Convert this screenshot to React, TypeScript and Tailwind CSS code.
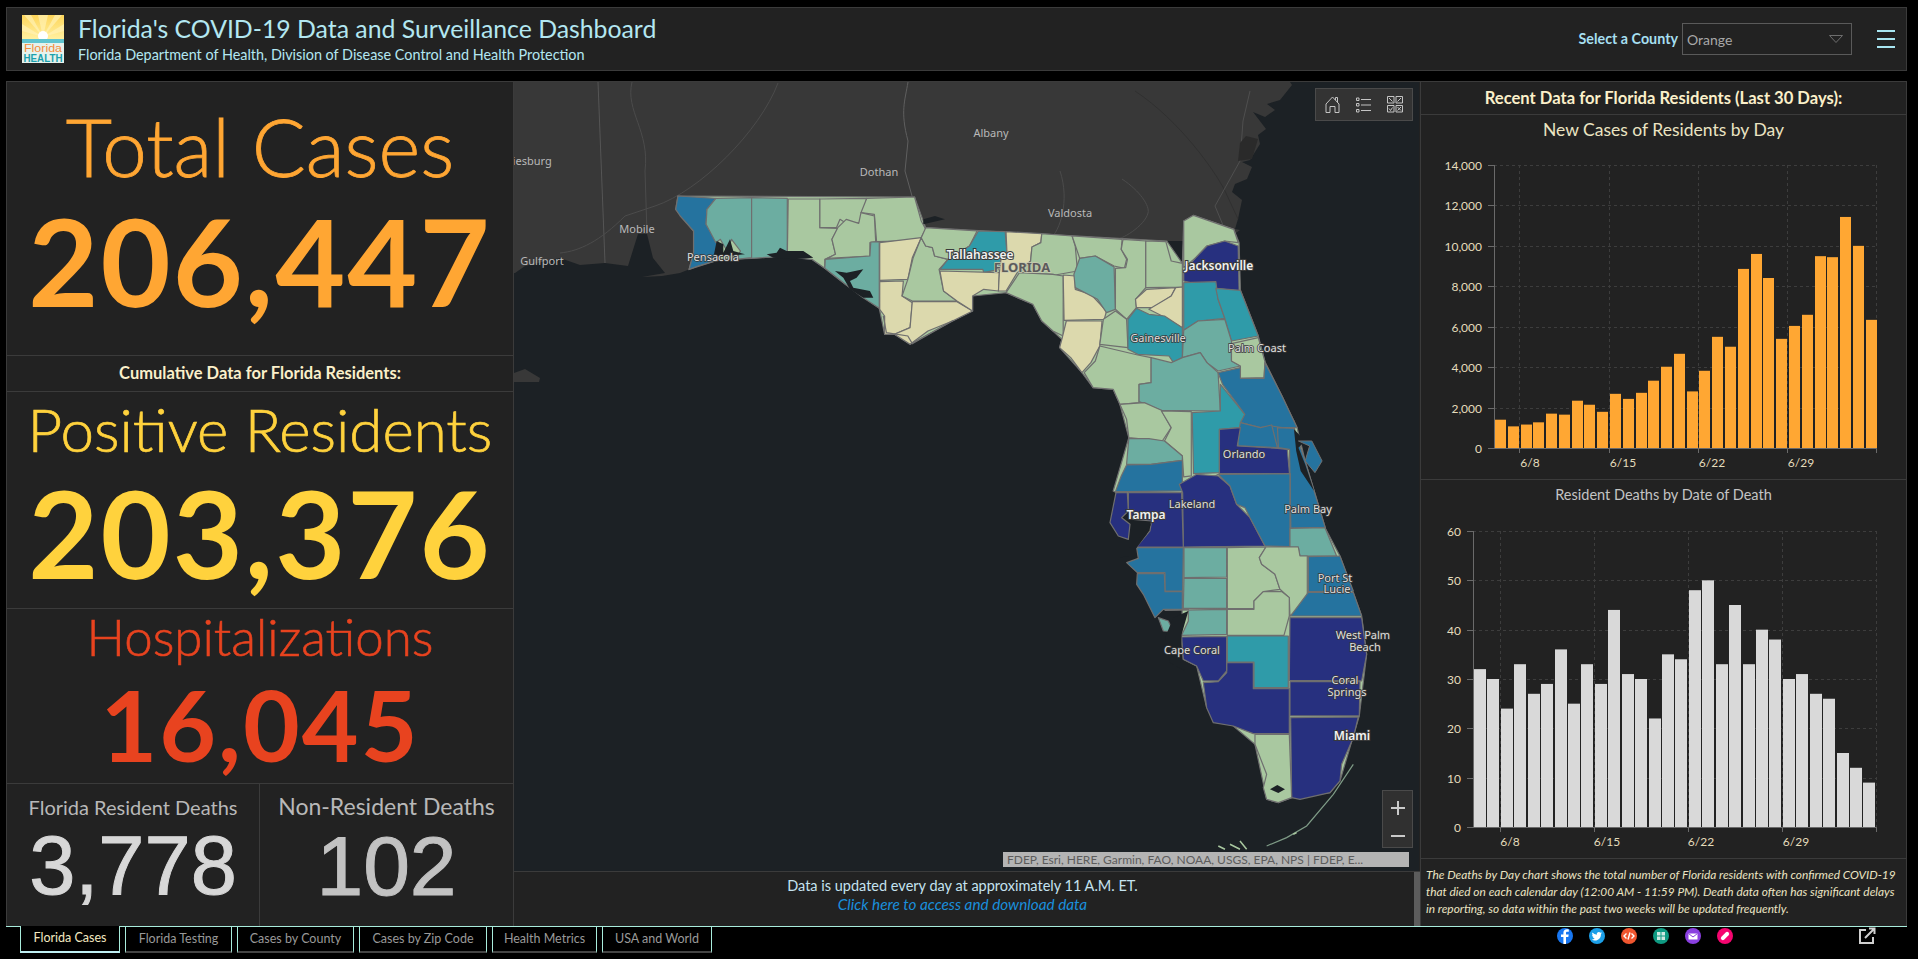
const DARK = "#27307f";
const BLUE = "#25739f";
const TEAL = "#2f9ba9";
const SAGE = "#6cada1";
const PALE = "#a9c8a0";
const CREAM = "#dcd9ad";
const WATER = "#1c2125";

type Region = [string, string];

// north and central counties, in the coordinates of the 700x380 crop
const northCounties: Region[] = [
  [BLUE, "1390,750 1465,750 1470,835 1390,835"],
  [BLUE, "85,75 170,82 150,115 148,160 175,215 180,265 130,285 110,295 120,245 120,180 90,135 80,115"],
  [SAGE, "170,82 250,80 250,260 215,265 225,240 205,205 195,240 180,205 170,215 148,160 150,115"],
  [SAGE, "250,80 330,82 330,255 250,262"],
  [PALE, "332,84 403,84 403,170 443,172 430,205 438,250 414,265 414,292 385,265 330,258"],
  [PALE, "403,84 508,82 493,155 462,157 448,145 440,170 403,170"],
  [PALE, "508,82 615,78 630,150 640,175 625,212 575,210 530,212 525,130 495,125"],
  [PALE, "443,170 462,145 490,157 495,125 525,135 528,212 515,215 515,255 420,262 438,250 430,205"],
  [SAGE, "415,265 515,255 517,213 536,213 536,412 500,380 460,340 414,292"],
  [CREAM, "537,215 630,200 610,260 600,325 537,328"],
  [CREAM, "537,332 590,330 587,375 610,395 605,470 570,490 548,490 548,435 537,415"],
  [PALE, "630,200 640,225 655,230 660,255 690,265 670,295 680,360 710,390 610,390 587,375 600,325 612,260"],
  [CREAM, "610,392 710,392 745,420 700,450 645,480 605,520 570,490 605,470"],
  [PALE, "640,170 755,180 738,225 690,265 660,255 655,230 640,225 630,200"],
  [TEAL, "758,180 818,182 822,245 810,250 805,295 770,305 768,295 672,295 690,265 738,225"],
  [CREAM, "672,300 805,305 803,360 770,355 745,375 745,420 710,390 680,360"],
  [CREAM, "820,182 900,188 898,215 878,228 875,270 845,305 820,360 803,360 805,305 810,250 822,245"],
  [PALE, "900,188 968,195 975,225 980,300 930,312 925,310 850,305 875,270 878,228 898,215"],
  [PALE, "850,305 925,310 948,315 948,495 925,480 900,450 880,400 820,365"],
  [CREAM, "948,312 975,315 975,355 1010,370 1045,420 1040,445 950,448"],
  [CREAM, "955,450 1035,450 1030,525 1010,575 990,605 965,560 940,530 945,505"],
  [PALE, "968,195 1080,205 1078,235 1090,265 1085,292 1062,285 1020,255 985,262"],
  [SAGE, "985,262 1020,255 1062,288 1065,415 1045,425 1025,385 975,350 972,310"],
  [PALE, "1082,205 1133,210 1133,350 1110,385 1112,410 1090,445 1065,415 1065,292 1088,290 1092,265 1078,235"],
  [PALE, "1133,210 1178,212 1190,270 1215,277 1215,348 1133,350"],
  [PALE, "1218,150 1240,133 1330,175 1340,215 1310,210 1270,225 1245,260 1218,290"],
  [DARK, "1218,300 1245,260 1270,225 1310,210 1340,225 1342,360 1290,352 1218,330"],
  [CREAM, "1110,385 1135,355 1200,350 1190,375 1150,410 1112,410"],
  [CREAM, "1200,350 1215,348 1215,470 1170,435 1140,415 1190,375"],
  [PALE, "1065,420 1090,445 1093,530 1030,520 1038,445"],
  [TEAL, "1112,412 1140,430 1175,435 1215,470 1215,560 1195,575 1185,555 1115,550 1093,535 1093,445"],
  [TEAL, "1218,335 1290,332 1295,385 1310,442 1250,450 1218,478"],
  [TEAL, "1290,352 1345,358 1385,495 1325,510 1310,442 1295,385"],
  [SAGE, "1218,478 1250,450 1310,445 1325,510 1325,570 1345,585 1295,600 1270,575 1255,545 1215,560"],
  [PALE, "1325,518 1385,500 1400,572 1398,620 1345,622 1345,585 1325,570"],
  [PALE, "1030,525 1115,552 1145,560 1145,635 1118,640 1118,695 1075,700 1060,655 1015,650 995,605 1020,570"],
  [SAGE, "1145,560 1190,575 1215,560 1255,545 1270,575 1295,605 1300,720 1168,718 1118,692 1118,640 1145,635"],
  [PALE, "1075,700 1130,695 1168,718 1190,770 1170,810 1095,800 1090,745"],
  [PALE, "1168,720 1235,722 1235,915 1218,918 1215,855 1175,810 1190,770"],
  [SAGE, "1095,803 1140,803 1175,810 1215,855 1215,868 1145,880 1090,880"],
  [BLUE, "1090,882 1145,880 1215,868 1215,960 1090,962 1065,962 1078,915"],
  [TEAL, "1237,725 1300,720 1300,640 1355,730 1345,770 1298,775 1298,905 1240,908"],
  [BLUE, "1295,605 1345,590 1345,622 1398,622 1400,575 1440,680 1472,770 1438,770 1415,765 1390,770 1345,755 1355,730 1305,640"],
  [BLUE, "1345,755 1390,770 1415,762 1428,830 1340,825 1338,800"],
  [DARK, "1298,775 1345,770 1338,825 1428,832 1450,835 1455,908 1298,908"],
  [BLUE, "1428,770 1465,772 1490,870 1535,1070 1458,1072 1455,835 1430,830"],
];

// south florida, in the coordinates of the 420x460 crop
const southCounties: Region[] = [
  [DARK, "538,190 590,160 655,165 690,195 710,250 750,290 795,375 550,378 548,215"],
  [DARK, "385,215 545,215 550,378 410,378 450,330 455,300 400,295 385,270"],
  [DARK, "348,215 382,215 385,270 365,290 390,310 385,355 355,345 330,305"],
  [BLUE, "655,160 870,158 870,377 795,375 750,290 735,260 710,250 690,195"],
  [SAGE, "870,322 975,320 1010,405 900,405 895,378 870,378"],
  [BLUE, "410,380 550,380 548,510 495,510 495,455 412,455 380,425 415,412"],
  [BLUE, "412,458 493,458 495,512 547,512 547,565 490,565 465,590 430,520 410,490"],
  [SAGE, "552,380 680,380 680,468 552,470"],
  [SAGE, "552,472 680,472 680,562 550,562"],
  [SAGE, "495,568 680,565 680,640 545,643 565,600 565,565"],
  [SAGE, "475,590 505,600 520,632 490,630"],
  [PALE, "682,380 798,378 778,410 785,430 825,460 840,505 790,512 762,540 762,563 682,563"],
  [PALE, "798,378 895,378 900,405 922,405 922,540 870,585 868,530 840,505 825,460 785,430 778,410"],
  [PALE, "682,565 762,565 762,540 790,512 845,512 868,530 868,585 852,643 682,643"],
  [BLUE, "925,407 1020,405 1060,510 925,512"],
  [BLUE, "925,514 1060,514 1085,585 872,585"],
  [DARK, "870,590 1085,590 1100,700 1085,780 868,778"],
  [DARK, "870,782 1080,782 1078,885 925,885 870,885"],
  [DARK, "872,890 1075,888 1060,950 1025,1030 1020,1080 990,1115 900,1135 875,1130"],
  [DARK, "610,785 655,782 680,755 680,725 760,725 760,803 868,803 868,938 760,938 700,915 640,905 620,860"],
  [DARK, "545,648 680,646 680,750 655,780 610,780 590,735 550,715"],
  [TEAL, "682,645 865,645 865,800 762,800 762,723 682,723"],
  [PALE, "765,940 868,940 875,1130 835,1145 800,1135 790,1100 800,1060 765,970"],
];

// silhouettes under the counties, so no land shows between neighbours
const northBase =
  "85,75 615,78 640,170 1180,210 1215,277 1218,150 1240,133 1330,175 1342,215 1345,358 1385,495 1400,572 1440,680 1472,770 1490,870 1535,1070 1300,1130 1060,960 1095,800 1075,700 1060,655 1015,650 990,605 940,530 945,505 900,450 880,400 820,365 745,375 745,420 700,450 605,520 570,490 548,490 536,412 460,340 414,292 385,265 330,255 250,262 180,265 110,295 120,245 120,180 80,115";
const southBase =
  "548,215 655,160 870,158 870,322 975,320 1020,405 1085,585 1100,700 1078,885 1020,1080 990,1115 875,1130 835,1145 800,1135 765,970 700,915 620,860 590,735 550,715 545,648 550,380";

const mapLabels: { t: string; x: number; y: number; strong?: boolean; muted?: boolean }[] = [
  { t: "Albany", x: 991, y: 136, muted: true },
  { t: "Dothan", x: 879, y: 175, muted: true },
  { t: "Valdosta", x: 1070, y: 216, muted: true },
  { t: "Hattiesburg", x: 521, y: 164, muted: true },
  { t: "Mobile", x: 637, y: 232, muted: true },
  { t: "Gulfport", x: 542, y: 264, muted: true },
  { t: "Pensacola", x: 713, y: 260 },
  { t: "Tallahassee", x: 980, y: 258, strong: true },
  { t: "Jacksonville", x: 1219, y: 269, strong: true },
  { t: "Gainesville", x: 1158, y: 341 },
  { t: "Palm Coast", x: 1257, y: 351 },
  { t: "Orlando", x: 1244, y: 457 },
  { t: "Lakeland", x: 1192, y: 507 },
  { t: "Tampa", x: 1146, y: 518, strong: true },
  { t: "Palm Bay", x: 1308, y: 512 },
  { t: "Port St", x: 1335, y: 581 },
  { t: "Lucie", x: 1337, y: 592 },
  { t: "West Palm", x: 1363, y: 638 },
  { t: "Beach", x: 1365, y: 650 },
  { t: "Cape Coral", x: 1192, y: 653 },
  { t: "Coral", x: 1345, y: 683 },
  { t: "Springs", x: 1347, y: 695 },
  { t: "Miami", x: 1352, y: 739, strong: true },
];

const newCases = [
  1400, 1070, 1160, 1270, 1700, 1650, 2340, 2140, 1790, 2680, 2430, 2730, 3330, 4020, 4660, 2800, 3820, 5500, 5010,
  8860, 9600, 8410, 5400, 6040, 6590, 9490, 9440, 11430, 10000, 6340,
];
const deaths = [
  32, 30, 24, 33, 27, 29, 36, 25, 33, 29, 44, 31, 30, 22, 35, 34, 48, 50, 33, 45, 33, 40, 38, 30, 31, 27, 26, 15, 12, 9,
];

const tabs = [
  { label: "Florida Cases", w: "w-[100px]", active: true },
  { label: "Florida Testing", w: "w-[107px]" },
  { label: "Cases by County", w: "w-[117px]" },
  { label: "Cases by Zip Code", w: "w-[128px]" },
  { label: "Health Metrics", w: "w-[105px]" },
  { label: "USA and World", w: "w-[110px]" },
];

function Counties({ regions, base, transform }: { regions: Region[]; base: string; transform: string }) {
  return (
    <g transform={transform}>
      <polygon points={base} fill={PALE} stroke="#6f6f6f" strokeWidth={1.2} vectorEffect="non-scaling-stroke" />
      {regions.map(([color, points]) => (
        <polygon
          key={points}
          points={points}
          fill={color}
          stroke="#6f6f6f"
          strokeWidth={1.2}
          strokeLinejoin="round"
          vectorEffect="non-scaling-stroke"
        />
      ))}
    </g>
  );
}

function FloridaMap() {
  return (
    <svg viewBox="514 81 905 790" className="block h-[790px] w-[905px] bg-[#1c2125]">
      {/* land north of florida */}
      <polygon
        fill="#383838"
        points="514,81 1290,81 1292,84 1280,99 1267,103 1275,109 1265,116 1253,111 1266,128 1258,134 1260,143 1250,159 1242,161 1252,166 1247,178 1235,183 1232,191 1242,199 1238,218 1235,228 1240,229 1225,240 900,240 780,245 700,255 690,268 680,272 662,275 642,276 665,272 653,257 647,233 638,233 628,265 605,262 580,264 560,257 525,265 515,272 514,272"
      />
      <polygon fill="#383838" points="514,372 525,368 540,377 539,381 514,381" />
      <g fill="none" stroke="#4b4b4b" strokeWidth="1">
        <path d="M598 81 L605 262" stroke="#555" />
        <path d="M632 81 C625 110 650 130 645 170 L647 233" />
        <path d="M778 82 C760 130 700 190 655 205 L625 215 C600 240 580 250 560 252" />
        <path d="M908 81 C905 100 900 110 908 140 L905 170 L912 195" stroke="#5f5f5f" />
        <path d="M1060 170 C1070 200 1060 230 1050 238" />
        <path d="M1122 178 C1140 190 1150 205 1148 212 C1145 225 1120 240 1115 238" />
        <path d="M1135 90 C1180 120 1215 170 1225 190 L1238 218" stroke="#303030" />
      </g>
      <polyline points="1225,229 1215,205 1240,160 1243,120 1250,90" fill="none" stroke="#4f4f4f" strokeWidth="1" />
      <polygon points="1240,142 1246,135 1258,138 1252,158 1238,160" fill="#2a2a2a" />

      <Counties regions={northCounties} base={northBase} transform="translate(640 170) scale(.4464 .3333)" />
      <Counties regions={southCounties} base={southBase} transform="translate(1000 420) scale(.3333)" />

      {/* bays and lagoons cut out of the counties */}
      <g transform="translate(510 80) scale(.3333)" fill={WATER}>
        <polygon points="770,520 800,515 810,500 830,510 880,510 910,530 850,535 790,530" />
        <polygon points="975,570 1010,575 1060,565 1040,590 1020,600 1030,620 1080,630 1090,650 1060,650 1020,625 1000,590" />
        <polygon points="620,480 640,490 640,515 660,475 670,510 705,520 650,525 610,530" />
        <polygon points="1240,415 1275,405 1305,415 1240,430" />
      </g>
      <g transform="translate(640 170) scale(.4464 .3333)">
        <polygon points="1465,775 1490,810 1475,830 1490,880 1510,960 1480,900 1470,840" fill={WATER} />
        <polygon
          points="1475,810 1505,810 1528,870 1512,905 1490,870 1500,825"
          fill={BLUE}
          stroke="#6f6f6f"
          vectorEffect="non-scaling-stroke"
        />
        <polyline
          points="545,435 552,485 600,495 610,518 660,480 702,448"
          fill="none"
          stroke="#6f6f6f"
          strokeWidth="1.2"
          vectorEffect="non-scaling-stroke"
        />
      </g>
      <g transform="translate(1000 420) scale(.3333)">
        <polygon points="360,410 420,350 455,305 440,340 410,380 385,405" fill={WATER} />
        <polygon points="520,590 565,570 545,640 540,720 555,750 510,725 495,650" fill={WATER} />
        <polygon points="810,1105 832,1092 855,1105 835,1116" fill={WATER} />
        <polyline
          points="800,1275 860,1250 920,1215 1000,1120 1060,1030"
          fill="none"
          stroke="#7f9c87"
          strokeWidth="1.2"
          vectorEffect="non-scaling-stroke"
        />
        <path
          d="M655 1275 l20 10 M690 1270 l30 15 M720 1260 l20 25 M880 1240 l10 -5"
          fill="none"
          stroke="#a9c8a0"
          strokeWidth="1.5"
          vectorEffect="non-scaling-stroke"
        />
      </g>

      <g textAnchor="middle" className="[font-family:'Noto_Sans',sans-serif]">
        {mapLabels.map((l) => (
          <text
            key={l.t}
            x={l.x}
            y={l.y}
            fill={l.muted ? "#b9b9b9" : l.strong ? "#f2f2f2" : "#dedede"}
            stroke={l.muted ? "none" : "#3a3a3a"}
            strokeWidth={l.strong ? 2 : 1.5}
            paintOrder="stroke"
            fontWeight={l.strong ? 600 : 400}
            fontSize={l.strong ? 12 : 11}
          >
            {l.t}
          </text>
        ))}
        <text
          x={1022}
          y={271}
          fill="#5b5b5b"
          stroke="#c9c9b0"
          strokeWidth={1.5}
          paintOrder="stroke"
          fontWeight={700}
          fontSize={13}
        >
          FLORIDA
        </text>
      </g>
    </svg>
  );
}

function BarChart({
  top,
  height,
  axisX,
  plotTop,
  plotBottom,
  max,
  step,
  ticks,
  values,
  barX,
  barStep,
  barW,
  fill,
  grid,
  labels,
}: {
  top: number;
  height: number;
  axisX: number;
  plotTop: number;
  plotBottom: number;
  max: number;
  step: number;
  ticks: string[];
  values: number[];
  barX: number;
  barStep: number;
  barW: number;
  fill: string;
  grid: number[];
  labels: { x: number; t: string }[];
}) {
  const right = 1875;
  const scale = (plotBottom - plotTop) / max;
  return (
    <svg viewBox={`1420 ${top} 485 ${height}`} className="block w-[485px]" height={height}>
      {ticks.map((t, i) => {
        const y = Math.round(plotBottom - i * step * scale) + 0.5;
        return (
          <g key={t}>
            {i > 0 && <line x1={axisX} x2={right} y1={y} y2={y} stroke="#3d3d3d" strokeDasharray="3 3" />}
            <line x1={axisX - 6} x2={axisX} y1={y} y2={y} stroke="#6a6a6a" />
            <text x={axisX - 12} y={y + 4} textAnchor="end" fill="#e4dcbc" fontSize={12}>
              {t}
            </text>
          </g>
        );
      })}
      {grid.map((x) => (
        <g key={x}>
          <line x1={x + 0.5} x2={x + 0.5} y1={plotTop} y2={plotBottom} stroke="#3d3d3d" strokeDasharray="3 3" />
          <line x1={x + 0.5} x2={x + 0.5} y1={plotBottom} y2={plotBottom + 5} stroke="#6a6a6a" />
        </g>
      ))}
      {values.map((v, i) => (
        <rect
          key={i}
          x={Math.round(barX + i * barStep)}
          y={plotBottom - v * scale}
          width={barW}
          height={v * scale}
          fill={fill}
        />
      ))}
      <line x1={axisX + 0.5} x2={axisX + 0.5} y1={plotTop} y2={plotBottom} stroke="#6a6a6a" />
      <line x1={axisX} x2={right} y1={plotBottom + 0.5} y2={plotBottom + 0.5} stroke="#6a6a6a" />
      {labels.map((l) => (
        <text key={l.t} x={l.x} y={plotBottom + 19} textAnchor="middle" fill="#e4dcbc" fontSize={12}>
          {l.t}
        </text>
      ))}
    </svg>
  );
}

function Logo() {
  return (
    <svg viewBox="0 0 42 48" className="h-[48px] w-[42px] shrink-0">
      <defs>
        <linearGradient id="sky" x1="0" y1="0" x2="0" y2="1">
          <stop offset="0" stopColor="#fdd55a" />
          <stop offset="1" stopColor="#fff0a0" />
        </linearGradient>
      </defs>
      <rect width="42" height="24" fill="url(#sky)" />
      <path d="M21 22 L2 0 H9 Z M21 22 L16 0 H26 Z M21 22 L33 0 H40 Z M21 22 L0 9 V16 Z M21 22 L42 9 V16 Z" fill="#fff3b8" opacity=".65" />
      <circle cx="21" cy="21" r="5" fill="#ffffff" />
      <rect y="24" width="42" height="24" fill="#e6f2ec" />
      <rect y="24" width="42" height="4" fill="#5fc3cf" />
      <text x="21" y="37" textAnchor="middle" fontSize="11.5" fill="#f58b3c" fontFamily="'Liberation Sans', sans-serif" textLength="38" lengthAdjust="spacingAndGlyphs">
        Florida
      </text>
      <text x="21" y="46.5" textAnchor="middle" fontSize="11" fontWeight="700" fill="#1ba0ad" fontFamily="'Liberation Sans', sans-serif" textLength="39" lengthAdjust="spacingAndGlyphs">
        HEALTH
      </text>
    </svg>
  );
}

function Header() {
  return (
    <header className="flex h-[64px] shrink-0 items-center border border-[#3b3b3b] bg-[#222222] pl-[15px] pr-[11px]">
      <Logo />
      <div className="ml-[14px] text-[#b3e7f1]">
        <div className="text-[24.8px] leading-[32px]">Florida's COVID-19 Data and Surveillance Dashboard</div>
        <div className="text-[14.4px] leading-[20px]">Florida Department of Health, Division of Disease Control and Health Protection</div>
      </div>
      <div className="ml-auto flex items-center">
        <span className="text-[14.3px] font-bold text-[#a6dff0]">Select a County</span>
        <div className="ml-[4px] flex h-[32px] w-[170px] items-center justify-between border border-[#5a5a5a] pl-[4px] pr-[8px] text-[14px] text-[#a8a8a8]">
          Orange
          <svg width="14" height="8" viewBox="0 0 14 8">
            <path d="M.5.5h13L7 7.5z" fill="none" stroke="#6e6e6e" />
          </svg>
        </div>
        <div className="ml-[25px] flex w-[18px] flex-col gap-[6px]">
          <div className="h-[2px] bg-[#a8e6f2]" />
          <div className="h-[2px] bg-[#a8e6f2]" />
          <div className="h-[2px] bg-[#a8e6f2]" />
        </div>
      </div>
    </header>
  );
}

function LeftPanel() {
  return (
    <aside className="flex w-[508px] shrink-0 flex-col border-x border-t border-[#3b3b3b] bg-[#222222] text-center">
      <section className="flex h-[273px] flex-col items-center pt-[24px] text-[#ffa633]">
        <div className="text-[80px] font-light leading-[80px] [-webkit-text-stroke:.8px_#ffa633]">Total Cases</div>
        <div className="mt-[6px] text-[121px] font-bold leading-[138px] tracking-[2px]">206,447</div>
      </section>
      <div className="flex h-[37px] items-center justify-center border-y border-[#3b3b3b] text-[16.5px] font-bold text-[#fbf0ca]">
        Cumulative Data for Florida Residents:
      </div>
      <section className="flex h-[216px] flex-col items-center pt-[5px] text-[#ffd23d]">
        <div className="text-[60px] font-light leading-[64px] [-webkit-text-stroke:.7px_#ffd23d]">Positive Residents</div>
        <div className="mt-[7px] text-[121px] font-bold leading-[130px] tracking-[2px]">203,376</div>
      </section>
      <section className="flex h-[175px] flex-col items-center border-t border-[#3b3b3b] pt-[1px] text-[#e8431f]">
        <div className="text-[51px] font-light leading-[54px] [-webkit-text-stroke:.6px_#e8431f]">Hospitalizations</div>
        <div className="mt-[8px] text-[98px] font-bold leading-[104px] tracking-[2px]">16,045</div>
      </section>
      <section className="flex flex-1 border-t border-[#3b3b3b]">
        <div className="flex w-[253px] flex-col items-center border-r border-[#3b3b3b] pt-[10px] text-[#b8b8b8]">
          <div className="text-[20px] leading-[26px]">Florida Resident Deaths</div>
          <div className="text-[83px] leading-[92px] text-[#d7d7d7] [-webkit-text-stroke:1px_#d7d7d7] [font-family:'Liberation_Sans',sans-serif]">3,778</div>
        </div>
        <div className="flex flex-1 flex-col items-center pt-[8px] text-[#b8b8b8]">
          <div className="text-[23px] leading-[28px]">Non-Resident Deaths</div>
          <div className="text-[84px] leading-[92px] text-[#c2c2c2] [-webkit-text-stroke:1px_#c2c2c2] [font-family:'Liberation_Sans',sans-serif]">102</div>
        </div>
      </section>
    </aside>
  );
}

function MapPanel() {
  return (
    <main className="flex w-[906px] shrink-0 flex-col bg-[#222222]">
      <div className="relative h-[790px] border-t border-[#3b3b3b]">
        <FloridaMap />
        <div className="absolute right-[7px] top-[6px] flex h-[33px] w-[98px] items-center justify-between border border-[#4a4a4a] bg-[#333333] px-[9px] text-[#c4c4c4]">
          <svg width="15" height="17" viewBox="0 0 15 17" fill="none" stroke="currentColor">
            <path d="M1 16.5V8L7.5 1 14 8v8.5h-4v-6H5v6zM10.5 4V1.5h2V6.5" />
          </svg>
          <svg width="15" height="16" viewBox="0 0 15 16" fill="none" stroke="currentColor">
            <path d="M5 2.5h10M5 8h10M5 13.5h10M.5 1h2.5v2.5H.5zM.5 6.5h2.5V9H.5zM.5 12.5h2.5V15H.5z" />
          </svg>
          <svg width="16" height="17" viewBox="0 0 16 17" fill="none" stroke="currentColor">
            <path d="M.5.5h6.500v6.500H.5zM9 .5h6.500v6.500H9zM.5 9.500h6.500v6.500H.5zM9 9.500h6.500v6.500H9zM2 2l3.500 3.500M10.500 5.500l3.500-3.500M2 12.500l1.500 2 2-3M10.500 11l3.500 3.500M14 11l-3.500 3.500" />
          </svg>
        </div>
        <div className="absolute right-[7px] top-[708px] flex h-[58px] w-[31px] flex-col items-center justify-around border border-[#4a4a4a] bg-[#303030]">
          <span className="block h-[14px] w-[14px] bg-[linear-gradient(#c9c9c9,#c9c9c9),linear-gradient(#c9c9c9,#c9c9c9)] bg-[length:100%_2px,2px_100%] bg-center bg-no-repeat" />
          <span className="block h-[2px] w-[14px] bg-[#c9c9c9]" />
        </div>
        <div className="absolute bottom-[4px] left-[489px] flex h-[15px] w-[406px] items-center overflow-hidden whitespace-nowrap bg-[#b4b4b4] px-[4px] text-[12px] text-[#5c5c5c]">
          FDEP, Esri, HERE, Garmin, FAO, NOAA, USGS, EPA, NPS | FDEP, E...
        </div>
      </div>
      <div className="relative flex flex-1 flex-col items-center justify-center border-t border-[#3b3b3b] pb-[9px] pr-[9px] text-center">
        <div className="text-[14.5px] leading-[18px] text-[#c5e2f0]">Data is updated every day at approximately 11 A.M. ET.</div>
        <div className="text-[15.3px] italic leading-[18px] text-[#1a8fdc]">Click here to access and download data</div>
        <div className="absolute bottom-0 right-0 top-0 w-[6px] bg-[#5c5c5c]" />
      </div>
    </main>
  );
}

function RightPanel() {
  return (
    <aside className="flex w-[487px] shrink-0 flex-col border-x border-t border-[#3b3b3b] bg-[#222222] text-center">
      <div className="flex h-[33px] shrink-0 items-center justify-center border-b border-[#3b3b3b] text-[16.6px] font-bold text-[#fbf0ca]">
        Recent Data for Florida Residents (Last 30 Days):
      </div>
      <div className="h-[31px] shrink-0 text-[17.5px] leading-[30px] text-[#ebe4c2]">New Cases of Residents by Day</div>
      <BarChart
        top={146}
        height={333}
        axisX={1493}
        plotTop={165}
        plotBottom={448}
        max={14000}
        step={2000}
        ticks={["0", "2,000", "4,000", "6,000", "8,000", "10,000", "12,000", "14,000"]}
        values={newCases}
        barX={1494}
        barStep={12.78}
        barW={11}
        fill="#ffa733"
        grid={[1518, 1608, 1697, 1786, 1875]}
        labels={[
          { x: 1529, t: "6/8" },
          { x: 1622, t: "6/15" },
          { x: 1711, t: "6/22" },
          { x: 1800, t: "6/29" },
        ]}
      />
      <div className="h-[35px] shrink-0 border-t border-[#3b3b3b] text-[14.5px] leading-[30px] text-[#c4c4c4]">Resident Deaths by Date of Death</div>
      <BarChart
        top={515}
        height={344}
        axisX={1472}
        plotTop={532}
        plotBottom={828}
        max={60}
        step={10}
        ticks={["0", "10", "20", "30", "40", "50", "60"]}
        values={deaths}
        barX={1473}
        barStep={13.43}
        barW={12}
        fill="#d9d9d9"
        grid={[1499, 1593, 1687, 1781, 1875]}
        labels={[
          { x: 1509, t: "6/8" },
          { x: 1606, t: "6/15" },
          { x: 1700, t: "6/22" },
          { x: 1795, t: "6/29" },
        ]}
      />
      <p className="flex-1 whitespace-nowrap border-t border-[#3b3b3b] px-[5px] pt-[7px] text-left text-[11.9px] italic leading-[17px] text-[#ebe4c2]">
        The Deaths by Day chart shows the total number of Florida residents with confirmed COVID-19
        <br />
        that died on each calendar day (12:00 AM - 11:59 PM). Death data often has significant delays
        <br />
        in reporting, so data within the past two weeks will be updated frequently.
      </p>
    </aside>
  );
}

function TabBar() {
  return (
    <nav className="relative flex h-[27px] shrink-0 border-t border-[#a8ecdc] pl-[14px]">
      <div className="flex gap-[5px]">
        {tabs.map((tab) =>
          tab.active ? (
            <div
              key={tab.label}
              className={`-mt-px flex h-[27px] items-center justify-center border-x border-b-2 border-x-[#a8ecdc] border-b-[#bfeef2] bg-black text-[12.5px] text-[#f3e9c0] ${tab.w}`}
            >
              {tab.label}
            </div>
          ) : (
            <div
              key={tab.label}
              className={`flex h-[26px] items-center justify-center border-x border-b-2 border-x-[#a8ecdc] border-b-[#444444] text-[12.5px] text-[#999999] ${tab.w}`}
            >
              {tab.label}
            </div>
          ),
        )}
      </div>
      <div className="absolute left-[1551px] top-px flex gap-[16px]">
        <span className="h-[16px] w-[16px] rounded-full bg-[#1877f2]">
          <svg viewBox="0 0 16 16" className="block">
            <path d="M9 16V9h2.300l.4-2.600H9V5c0-.8.3-1.300 1.400-1.300h1.400V1.400C11.500 1.300 10.700 1.200 9.900 1.200 7.800 1.200 6.400 2.500 6.400 4.700v1.700H4V9h2.400v7z" fill="#fff" />
          </svg>
        </span>
        <span className="h-[16px] w-[16px] rounded-full bg-[#1c9fe8]">
          <svg viewBox="0 0 16 16" className="block">
            <path d="M13 5.200c-.4.200-.8.300-1.200.3.400-.3.800-.7.900-1.200-.4.300-.9.400-1.300.5a2.100 2.100 0 0 0-3.600 1.900A6 6 0 0 1 3.400 4.500a2.100 2.100 0 0 0 .6 2.800c-.3 0-.7-.1-1-.3 0 1 .7 1.900 1.700 2.100-.3.100-.6.100-.9 0 .3.800 1 1.400 1.900 1.500a4.200 4.200 0 0 1-3.100.9 6 6 0 0 0 9.300-5.300c.4-.3.800-.6 1.100-1z" fill="#fff" />
          </svg>
        </span>
        <span className="h-[16px] w-[16px] rounded-full bg-[#f0562f]">
          <svg viewBox="0 0 16 16" className="block" fill="none" stroke="#fff" strokeWidth="1.400">
            <path d="M5.500 5.500 3 8l2.500 2.500M10.500 5.500 13 8l-2.500 2.500M9 4.500 7 11.500" />
          </svg>
        </span>
        <span className="h-[16px] w-[16px] rounded-full bg-[#0f9a82]">
          <svg viewBox="0 0 16 16" className="block" fill="#cfe9e2">
            <path d="M4 4h3.500v3.500H4zM8.500 4H12v3.500H8.500zM4 8.500h3.500V12H4zM8.500 8.500H12V12H8.500z" />
          </svg>
        </span>
        <span className="h-[16px] w-[16px] rounded-full bg-[#8a3fe0]">
          <svg viewBox="0 0 16 16" className="block">
            <path d="M3.500 5.500h9v6h-9z" fill="#fff" />
            <path d="M3.500 5.500 8 9l4.500-3.500" fill="none" stroke="#8a3fe0" />
          </svg>
        </span>
        <span className="h-[16px] w-[16px] rounded-full bg-[#f5056f]">
          <svg viewBox="0 0 16 16" className="block">
            <rect x="3" y="6" width="10" height="4" rx="2" fill="#fff" transform="rotate(-45 8 8)" />
          </svg>
        </span>
      </div>
      <svg width="18" height="18" viewBox="0 0 18 18" className="absolute left-[1852px] top-0" fill="none" stroke="#d0d0d0" strokeWidth="2">
        <path d="M8 3H2v13h13v-6M7 11 16 2M11 1.500h5.500V7" />
      </svg>
    </nav>
  );
}

export default function App() {
  return (
    <div className="flex h-[959px] w-[1918px] flex-col overflow-hidden bg-black pl-[6px] pr-[11px] pt-[7px] text-white [font-family:Lato,sans-serif]">
      <Header />
      <div className="mt-[10px] flex h-[845px] shrink-0">
        <LeftPanel />
        <MapPanel />
        <RightPanel />
      </div>
      <TabBar />
    </div>
  );
}
